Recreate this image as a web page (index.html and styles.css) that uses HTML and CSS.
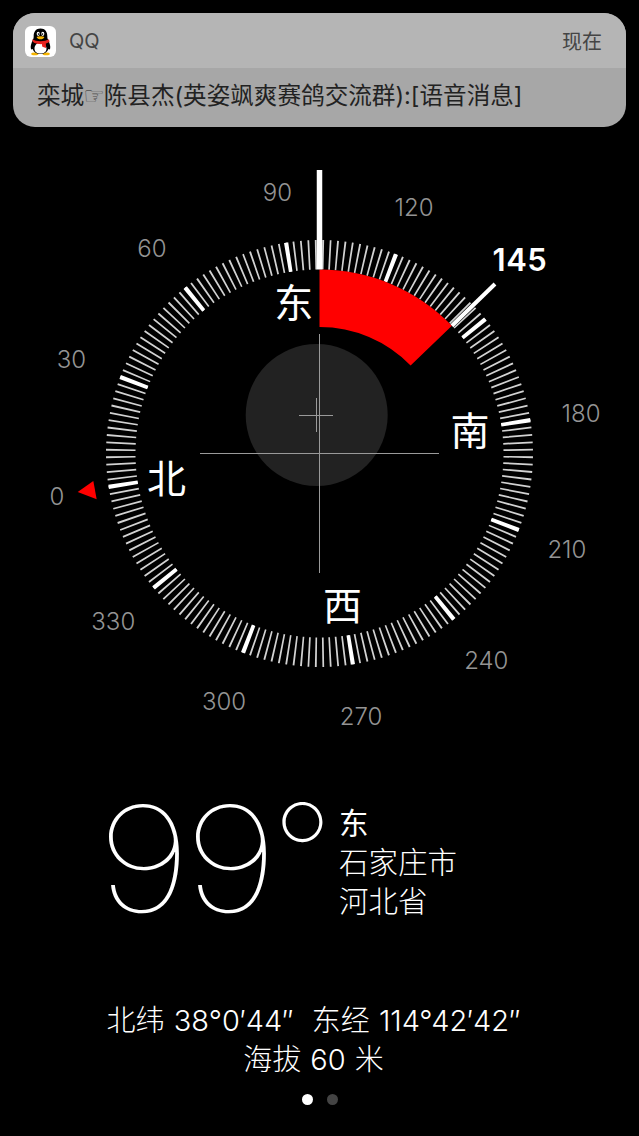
FILE: index.html
```html
<!DOCTYPE html>
<html lang="zh-CN">
<head>
    <meta charset="UTF-8">
    <meta name="viewport" content="width=device-width, initial-scale=1.0">
    <title>指南针</title>
    <link rel="stylesheet" href="styles.css">
</head>
<body>
    <div class="notice">
        <div class="notice-head">
            <svg class="app-icon" viewBox="0 0 30 30">
                <rect width="30" height="30" rx="6" fill="#fff"/>
                <ellipse cx="9.5" cy="27" rx="3.5" ry="1.3" fill="#f5b400"/>
                <ellipse cx="20.5" cy="27" rx="3.5" ry="1.3" fill="#f5b400"/>
                <path d="M15 2.5c-4.6 0-6.6 3.4-6.6 7.4 0 1.4-.2 2.4-.8 3.6-1.3 2.6-2.4 5.6-2 8 .3 1.4 1 1.6 1.9.8.9 3.2 4 4.9 7.5 4.9s6.600-1.700 7.500-4.900c.9.8 1.600.6 1.900-.8.4-2.400-.7-5.400-2-8-.6-1.200-.8-2.200-.8-3.600 0-4-2-7.400-6.600-7.400z" fill="#000"/>
                <path d="M15 16c-3.800 0-5.800 3-5.800 6 0 3 2.600 4.700 5.800 4.700s5.800-1.700 5.800-4.700c0-3-2-6-5.800-6z" fill="#fff"/>
                <path d="M6.800 12.800c2.200 1.200 5 1.900 8.200 1.900s6-.7 8.200-1.900l.6 2.400c-1 .8-2.200 1.300-3.600 1.700l.2 4.400-3.600-1.300-.6-2.500c-.9.100-1.800.100-2.700 0-2.400-.2-4.500-.9-5.900-2.200z" fill="#e8231f"/>
                <ellipse cx="12.800" cy="7.600" rx="1.500" ry="2" fill="#fff"/>
                <ellipse cx="17.200" cy="7.600" rx="1.500" ry="2" fill="#fff"/>
                <circle cx="13.100" cy="7.800" r=".8" fill="#000"/>
                <circle cx="16.900" cy="7.800" r=".8" fill="#000"/>
                <path d="M11.200 10.600c1.200-.9 6.400-.9 7.600 0-.6 1.500-2 2.200-3.800 2.200s-3.200-.7-3.800-2.200z" fill="#f5b400"/>
            </svg>
            <span class="app-name">QQ</span>
            <span class="notice-time">现在</span>
        </div>
        <div class="notice-body">栾城<span class="hand">☞</span>陈县杰(英姿飒爽赛鸽交流群):[语音消息]</div>
    </div>

    <svg class="compass" viewBox="0 150 639 590">
        <circle cx="316.700" cy="415" r="71" fill="#222"/>
        <path class="hair" d="M299 415.500H333M316.500 398V432"/>
        <path class="hair" d="M200 453.500H439M319.500 334V573"/>

        <g transform="rotate(-189 319.500 453.500)">
            <circle class="ticks" cx="319.500" cy="453.500" r="198.750" pathLength="360"/>
            <circle class="ticks-major" cx="319.500" cy="453.500" r="198.750" pathLength="360"/>
        </g>

        <path class="sector" d="M319.500 269.500A184 184 0 0 1 451.900 325.700L410.600 365.500A126.500 126.500 0 0 0 319.500 327Z"/>
        <path class="needle" d="M319.500 170V269.500"/>
        <path class="bearing" d="M451.900 325.700L495 284"/>
        <path class="marker" d="M77.700 492L93.300 481L96.700 499.300Z"/>

        <text class="degree" x="57" y="496">0</text>
        <text class="degree" x="71.500" y="359.500">30</text>
        <text class="degree" x="152" y="248.600">60</text>
        <text class="degree" x="277.500" y="192.800">90</text>
        <text class="degree" x="414" y="207.100">120</text>
        <text class="degree" x="581" y="413">180</text>
        <text class="degree" x="566.900" y="549.500">210</text>
        <text class="degree" x="486.300" y="660.400">240</text>
        <text class="degree" x="361" y="716.200">270</text>
        <text class="degree" x="224" y="701.900">300</text>
        <text class="degree" x="113.300" y="621.300">330</text>
        <text class="bearing-label" x="520" y="259.500">145</text>

        <text class="cardinal" x="293.800" y="302">东</text>
        <text class="cardinal" x="470" y="430">南</text>
        <text class="cardinal" x="342.500" y="605">西</text>
        <text class="cardinal" x="166.500" y="478">北</text>
    </svg>

    <div class="reading">
        <div class="heading"><span class="heading-num">99</span><span class="heading-deg">°</span></div>
        <div class="place">
            <div class="place-dir">东</div>
            <div>石家庄市</div>
            <div>河北省</div>
        </div>
    </div>

    <div class="coords">
        <div>北纬 38°0′44″&nbsp;&nbsp;东经 114°42′42″</div>
        <div>海拔 60 米</div>
    </div>

    <div class="dots">
        <span class="dot dot-on"></span>
        <span class="dot"></span>
    </div>
</body>
</html>
```

FILE: styles.css
```css
body {
    margin: 0;
    width: 639px;
    height: 1136px;
    overflow: hidden;
    background-color: #000;
    color: #fff;
    font-family: Inter, "Noto Sans CJK SC", sans-serif;
}
.notice {
    margin: 13px 13px 0;
    height: 114px;
    border-radius: 22px;
    overflow: hidden;
    background-color: #a7a7a7;
}
.notice-head {
    height: 55px;
    display: flex;
    align-items: center;
    padding: 0 24px 0 12px;
    background-color: #b5b5b5;
    color: #444;
    font-size: 20px;
}
.app-icon {
    width: 31px;
    height: 31px;
    margin-right: 13px;
    margin-top: 2px;
}
.app-name {
    flex: 1;
    font-family: Inter, sans-serif;
    margin-top: 1px;
}
.notice-body {
    padding: 13px 0 0 24px;
    font-size: 23.600px;
    line-height: 30px;
    color: #222;
    white-space: nowrap;
}
.hand {
    font-family: "DejaVu Sans", sans-serif;
    color: #4e4e4e;
    font-size: 24px;
    line-height: 20px;
    margin: 0 -1px;
}
.compass {
    display: block;
    width: 639px;
    height: 590px;
    margin-top: 23px;
}
.hair {
    stroke: #9a9a9a;
    stroke-width: 1;
    fill: none;
}
.ticks {
    fill: none;
    stroke: #d2d2d2;
    stroke-width: 29.500;
    stroke-dasharray: 0.500 1.500;
    stroke-dashoffset: 0.250;
}
.ticks-major {
    fill: none;
    stroke: #fff;
    stroke-width: 29.500;
    stroke-dasharray: 1.150 28.850;
    stroke-dashoffset: 0.575;
}
.sector {
    fill: #f00;
}
.needle {
    stroke: #fff;
    stroke-width: 5.500;
}
.bearing {
    stroke: #fff;
    stroke-width: 4;
}
.marker {
    fill: #f00;
}
.degree {
    fill: #949494;
    font-size: 24px;
    font-weight: 300;
    text-anchor: middle;
    dominant-baseline: central;
}
.bearing-label {
    fill: #fff;
    font-size: 31px;
    font-weight: 600;
    letter-spacing: 0.500px;
    text-anchor: middle;
    dominant-baseline: central;
}
.cardinal {
    fill: #fff;
    font-size: 39px;
    text-anchor: middle;
    dominant-baseline: central;
}
.reading {
    display: flex;
    height: 150px;
    margin-top: 46px;
    padding-left: 97px;
}
.heading {
    width: 242px;
    margin-top: -2px;
    font-weight: 100;
    font-size: 146px;
    line-height: 150px;
    white-space: nowrap;
}
.heading-num {
    display: inline-block;
    letter-spacing: -6px;
    transform: scaleX(1.140);
    transform-origin: left;
}
.heading-deg {
    margin-left: 22px;
    font-size: 135px;
    line-height: 0;
    vertical-align: 10px;
}
.place {
    padding-top: 18px;
    font-size: 29.500px;
    line-height: 39px;
    font-weight: 300;
}
.place-dir {
    font-weight: 400;
}
.coords {
    margin-top: 65px;
    padding-right: 12px;
    text-align: center;
    font-size: 29px;
    line-height: 39px;
    font-weight: 300;
    word-spacing: 1px;
    white-space: nowrap;
}
.dots {
    display: flex;
    justify-content: center;
    gap: 14px;
    margin-top: 15px;
}
.dot {
    width: 11px;
    height: 11px;
    border-radius: 50%;
    background-color: #444;
}
.dot-on {
    background-color: #fff;
}
```
